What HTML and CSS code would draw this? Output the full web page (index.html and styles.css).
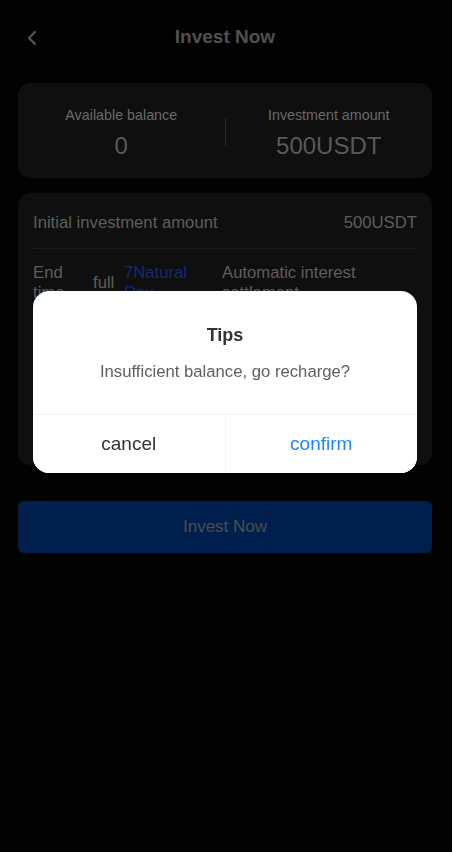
FILE: index.html
```html
<!DOCTYPE html>
<html lang="en">
<head>
<meta charset="utf-8">
<title>Invest Now</title>
<link rel="stylesheet" href="styles.css">
</head>
<body>
<div class="page">
  <header class="nav">
    <span class="back">
      <svg width="12" height="16" viewBox="0 0 12 16"><path d="M9 2 L3 8 L9 14" fill="none" stroke="#565656" stroke-width="2.2" stroke-linecap="round" stroke-linejoin="round"/></svg>
    </span>
    <h1 class="nav-title">Invest Now</h1>
  </header>
  <main class="content">
    <section class="card summary">
      <div class="stat">
        <div class="stat-label">Available balance</div>
        <div class="stat-value">0</div>
      </div>
      <div class="vline"></div>
      <div class="stat">
        <div class="stat-label">Investment amount</div>
        <div class="stat-value">500USDT</div>
      </div>
    </section>
    <section class="card details">
      <div class="row first">
        <span>Initial investment amount</span>
        <span>500USDT</span>
      </div>
      <div class="row terms">
        <span class="c1">End time</span>
        <span class="c2">full</span>
        <span class="c3">7Natural Day</span>
        <span class="c4">Automatic interest settlement</span>
      </div>
    </section>
    <button class="invest">Invest Now</button>
  </main>
</div>
<div class="mask">
  <div class="dialog">
    <div class="d-title">Tips</div>
    <div class="d-msg">Insufficient balance, go recharge?</div>
    <div class="d-foot">
      <button class="d-btn cancel">cancel</button>
      <button class="d-btn confirm">confirm</button>
    </div>
  </div>
</div>
</body>
</html>
```
FILE: styles.css
```css
* { box-sizing: border-box; }
html, body { margin: 0; padding: 0; }
body {
  background: #020202;
  font-family: "Liberation Sans", Arial, sans-serif;
  min-height: 852px;
}
.page { width: 450px; }
.nav {
  height: 74px;
  display: flex;
  align-items: center;
  justify-content: center;
  position: relative;
}
.back {
  position: absolute;
  left: 26px;
  top: 30px;
  width: 12px;
  height: 16px;
  display: flex;
}
.nav-title {
  margin: 0;
  font-size: 19px;
  font-weight: bold;
  color: #505050;
  line-height: 24px;
}
.content {
  padding: 9px 18px 0;
}
.card {
  background: #0f0f10;
  border-radius: 12px;
}
.summary {
  height: 95px;
  display: flex;
  align-items: center;
}
.stat {
  flex: 1;
  text-align: center;
  padding-top: 4px;
}
.stat-label {
  font-size: 14.3px;
  line-height: 20px;
  color: #6a6a6a;
}
.stat-value {
  font-size: 24px;
  line-height: 30px;
  color: #595959;
  margin-top: 6px;
}
.vline {
  width: 1px;
  height: 28px;
  background: #2a2a2a;
  margin-top: 2px;
}
.details {
  margin-top: 15px;
  height: 272px;
  padding: 0 15px;
  font-size: 16.7px;
  color: #5e5e5e;
}
.row {
  display: flex;
  line-height: 20px;
}
.row.first {
  justify-content: space-between;
  padding: 20px 0 15px;
  border-bottom: 1px solid #1c1c1d;
}
.row.terms {
  padding-top: 14px;
  align-items: center;
}
.c1 { width: 60px; flex: none; padding-right: 8px; }
.c2 { width: 31px; flex: none; }
.c3 { width: 98px; flex: none; padding-right: 20px; color: #152870; }
.c4 { flex: 1; }
.invest {
  margin-top: 36px;
  width: 100%;
  height: 52px;
  border: none;
  border-radius: 6px;
  background: #001f4d;
  color: #4d4d4d;
  font-family: inherit;
  font-size: 17px;
}
.mask {
  position: fixed;
  inset: 0;
  background: rgba(0, 0, 0, 0);
}
.dialog {
  position: absolute;
  top: 291px;
  left: 33px;
  width: 384px;
  background: #fff;
  border-radius: 16px;
  overflow: hidden;
  text-align: center;
}
.d-title {
  padding-top: 32px;
  font-size: 18px;
  font-weight: bold;
  line-height: 24px;
  color: #323233;
}
.d-msg {
  padding: 15px 20px 32px;
  font-size: 16.7px;
  line-height: 20px;
  color: #5f5f60;
}
.d-foot {
  display: flex;
  border-top: 1px solid #f3f3f4;
}
.d-btn {
  flex: 1;
  height: 58px;
  border: none;
  background: #fff;
  font-family: inherit;
  font-size: 19px;
}
.cancel { color: #323233; border-right: 1px solid #f3f3f4; }
.confirm { color: #1e88f8; }
```
